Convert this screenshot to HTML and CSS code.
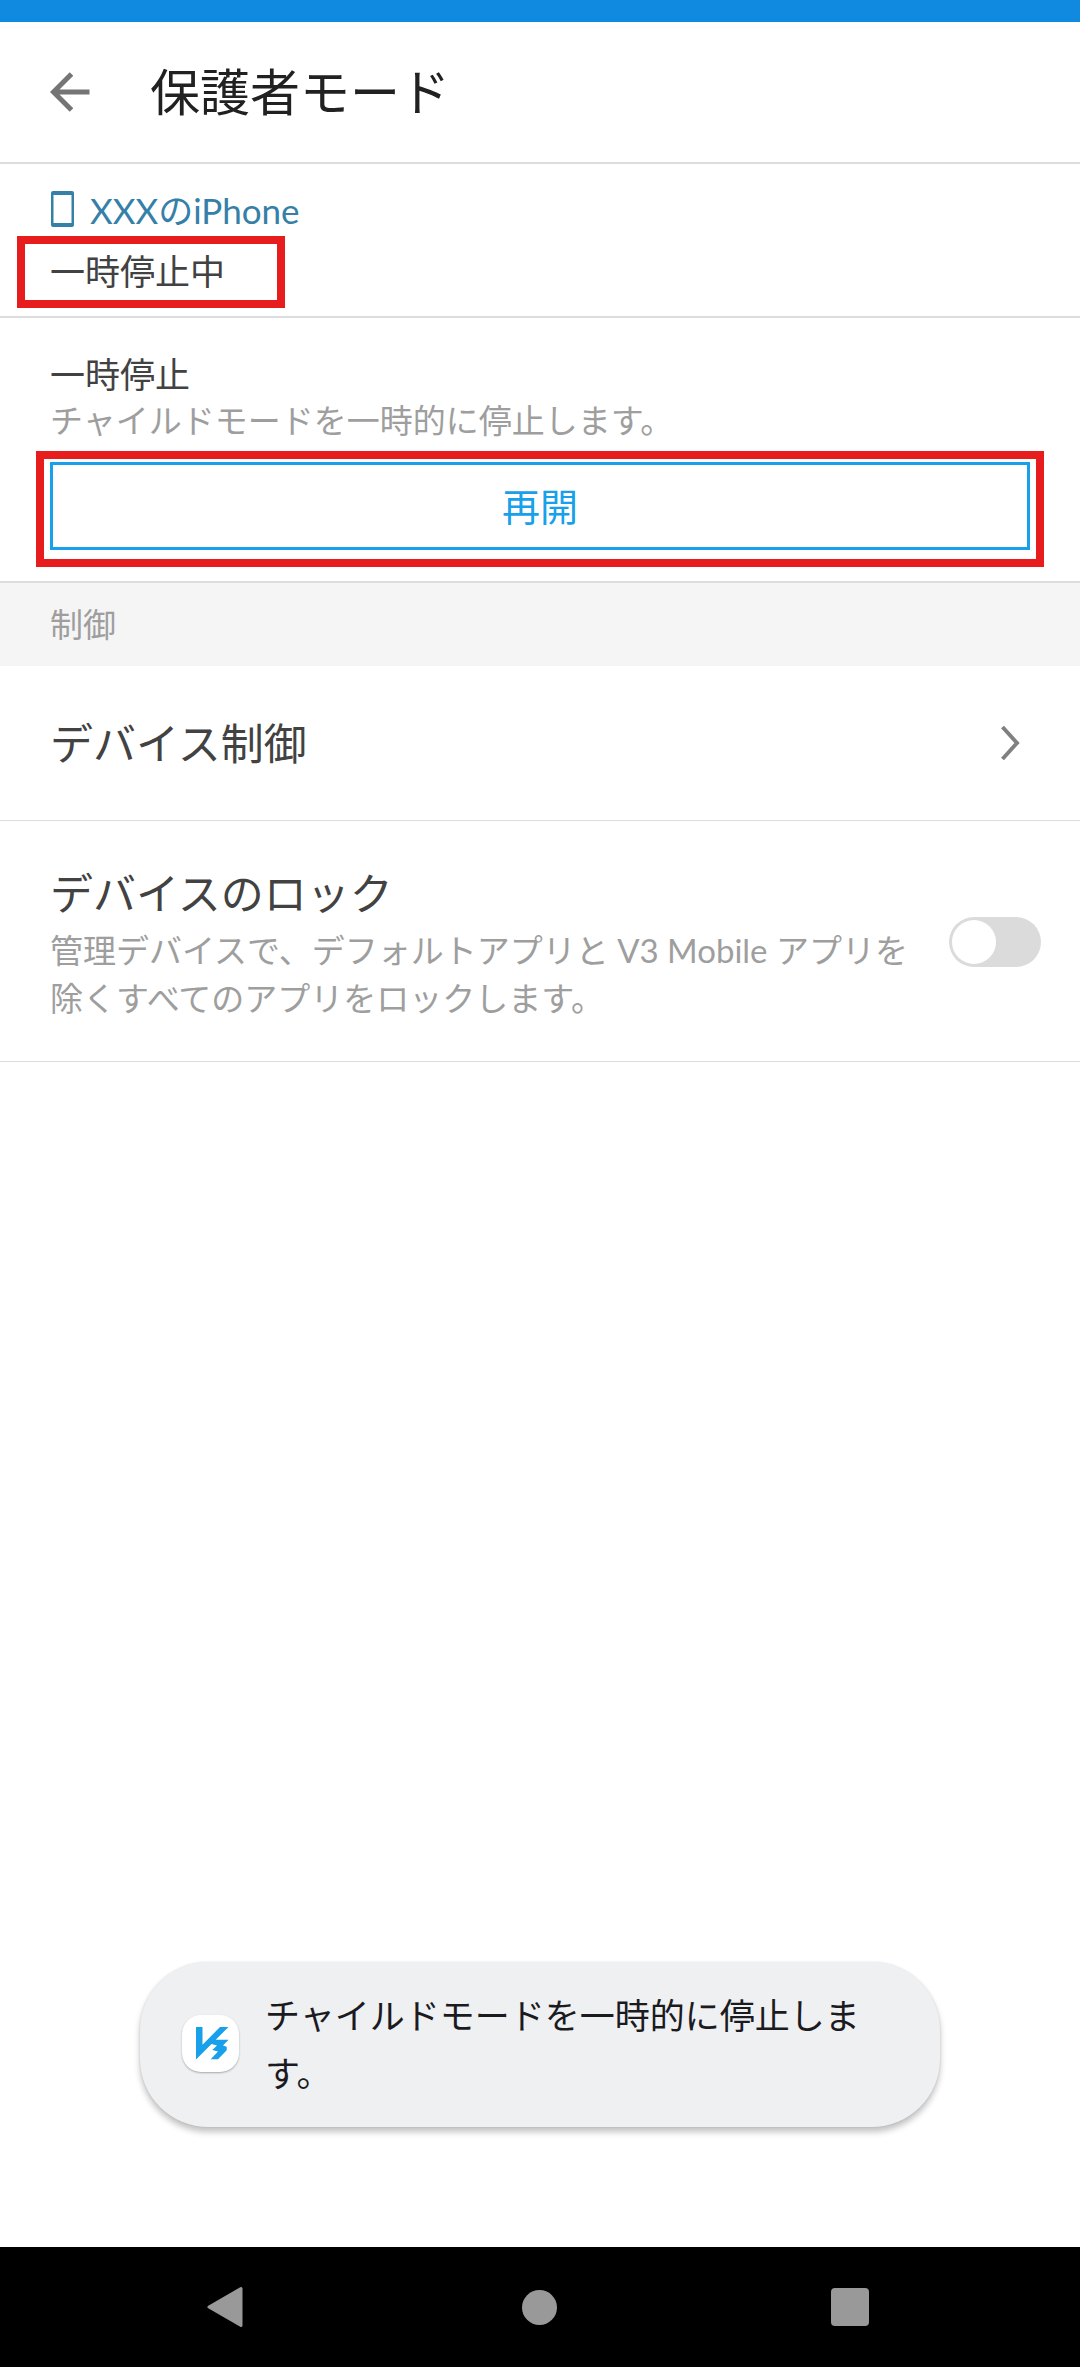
FILE: index.html
```
<!DOCTYPE html>
<html lang="ja">
<head>
  <meta charset="UTF-8" />
  <meta name="viewport" content="width=device-width, initial-scale=1.0"/>
  <title>保護者モード</title>
  <link rel="stylesheet" href="styles.css">
</head>
<body>

  <div class="status-bar"></div>

  <header class="header">
    <svg class="back" viewBox="0 0 40 40" width="40" height="40">
      <path d="M39.5 20H4M21.5 2L3.5 20l18 18" fill="none" stroke="#757575" stroke-width="5"/>
    </svg>
    <h1>保護者モード</h1>
  </header>

  <section class="device">
    <div class="device-name">
      <svg viewBox="0 0 23 36" width="23" height="36">
        <path fill="#3580a8" fill-rule="evenodd" d="M2 0h19a2 2 0 0 1 2 2v32a2 2 0 0 1-2 2H2a2 2 0 0 1-2-2V2a2 2 0 0 1 2-2zM2.500 4v28h18V4z"/>
      </svg>
      <span>XXXのiPhone</span>
    </div>
    <div class="mark mark-status">一時停止中</div>
  </section>

  <section class="pause">
    <h2>一時停止</h2>
    <p>チャイルドモードを一時的に停止します。</p>
    <div class="mark mark-button">
      <button type="button">再開</button>
    </div>
  </section>

  <div class="group">制御</div>

  <div class="row">
    <h3>デバイス制御</h3>
    <svg class="chevron" viewBox="0 0 20 36" width="20" height="36">
      <path d="M2.500 2L17 18 2.500 34" fill="none" stroke="#808080" stroke-width="4"/>
    </svg>
  </div>

  <div class="row row-lock">
    <div class="row-text">
      <h3>デバイスのロック</h3>
      <p>管理デバイスで、デフォルトアプリと V3 Mobile アプリを<br>除くすべてのアプリをロックします。</p>
    </div>
    <div class="switch"><span></span></div>
  </div>

  <div class="spacer"></div>

  <div class="toast">
    <div class="app-icon">
      <svg viewBox="0 0 33 33" width="33" height="33">
        <path fill="#18a0ea" d="M0 0h6.500v17.700L24 0h8.500L19.700 12.700h12.800l-5.500 5.800 3.700 1.200v3.600l-8.700 8.900h-7.300l7.300-7.700-5.700-1.500 4.700-4.500-5.500-1.500L0 32.500z"/>
      </svg>
    </div>
    <p>チャイルドモードを一時的に停止します。</p>
  </div>

  <nav class="nav">
    <svg viewBox="0 0 36 42" width="36" height="42">
      <path d="M2 21L34 2.500v37z" fill="#999" stroke="#999" stroke-width="3" stroke-linejoin="round"/>
    </svg>
    <span class="home"></span>
    <span class="recent"></span>
  </nav>

</body>
</html>
```
FILE: styles.css
```
* {
  box-sizing: border-box;
}

body {
  margin: 0;
  height: 2367px;
  display: flex;
  flex-direction: column;
  background: #fff;
  color: #424242;
  font-family: "Noto Sans CJK JP", sans-serif;
}

h1, h2, h3, p {
  margin: 0;
  font-weight: 400;
}

.status-bar {
  height: 22px;
  background: #108ae0;
}

.header {
  height: 142px;
  display: flex;
  align-items: center;
  gap: 60px;
  padding-left: 50px;
  border-bottom: 2px solid #ddd;
}

.header h1 {
  color: #212121;
  font-size: 50px;
  line-height: 70px;
  padding-bottom: 6px;
}

.device {
  height: 154px;
  padding-top: 22px;
  border-bottom: 2px solid #ddd;
}

.device-name {
  height: 50px;
  display: flex;
  align-items: flex-start;
  gap: 16px;
  padding-left: 51px;
  color: #3580a8;
  font-family: Lato, "Noto Sans CJK JP", sans-serif;
  font-size: 35px;
  line-height: 48px;
}

.device-name svg {
  margin-top: 5px;
}

/* red frames around the highlighted parts */
.mark {
  border: 8px solid #e71c1c;
}

.mark-status {
  width: 268px;
  height: 72px;
  margin-left: 17px;
  padding-left: 25px;
  font-size: 35px;
  line-height: 51px;
}

.pause {
  height: 265px;
  padding-top: 32px;
  border-bottom: 2px solid #ddd;
}

.pause h2 {
  padding-left: 50px;
  font-size: 35px;
  line-height: 46px;
}

.pause p {
  padding-left: 50px;
  color: #9e9e9e;
  font-size: 33px;
  line-height: 46px;
}

.mark-button {
  width: 1008px;
  height: 116px;
  margin: 9px 0 0 36px;
  padding: 3px 6px 9px;
}

.mark-button button {
  display: block;
  width: 100%;
  height: 88px;
  padding: 0 0 4px;
  border: 3px solid #18a0ea;
  background: #fff;
  color: #18a0ea;
  font-family: inherit;
  font-size: 38px;
}

.group {
  height: 83px;
  padding-left: 50px;
  background: #f5f5f5;
  color: #9e9e9e;
  font-size: 33px;
  line-height: 80px;
}

.row {
  height: 155px;
  display: flex;
  align-items: center;
  justify-content: space-between;
  padding: 0 60px 0 50px;
  border-bottom: 1px solid #ddd;
}

.row h3 {
  font-size: 43px;
  line-height: 62px;
  padding-bottom: 4px;
}

.row .chevron {
  margin-bottom: 1px;
}

.row-lock {
  height: 241px;
  padding-right: 39px;
}

.row-lock p {
  color: #9e9e9e;
  font-family: Lato, "Noto Sans CJK JP", sans-serif;
  font-size: 33px;
  line-height: 48px;
  white-space: nowrap;
}

.switch {
  width: 92px;
  height: 50px;
  margin-top: 2px;
  padding: 3px;
  border-radius: 25px;
  background: #dbdbdb;
}

.switch span {
  display: block;
  width: 44px;
  height: 44px;
  border-radius: 50%;
  background: #fff;
}

.spacer {
  flex: 1;
}

.toast {
  width: 800px;
  height: 165px;
  display: flex;
  align-items: center;
  gap: 26px;
  margin: 0 auto 120px;
  padding: 0 70px 0 42px;
  border-radius: 68px;
  background: #eff0f2;
  box-shadow: 0 5px 6px rgba(0, 0, 0, 0.24), 0 0 2px rgba(0, 0, 0, 0.12);
}

.app-icon {
  flex: none;
  width: 57px;
  height: 57px;
  margin-bottom: 2px;
  padding: 12px 0 0 14px;
  border-radius: 19px;
  background: #fff;
  box-shadow: 0 1px 2px rgba(0, 0, 0, 0.3);
}

.app-icon svg {
  display: block;
}

.toast p {
  color: #1b1b1f;
  font-size: 35px;
  line-height: 58px;
  padding-bottom: 4px;
}

.nav {
  height: 120px;
  display: flex;
  align-items: center;
  justify-content: space-between;
  padding: 0 211px 0 207px;
  background: #000;
}

.nav .home {
  width: 35px;
  height: 35px;
  margin-left: 5px;
  border-radius: 50%;
  background: #999;
}

.nav .recent {
  width: 38px;
  height: 38px;
  border-radius: 4px;
  background: #999;
}
```
